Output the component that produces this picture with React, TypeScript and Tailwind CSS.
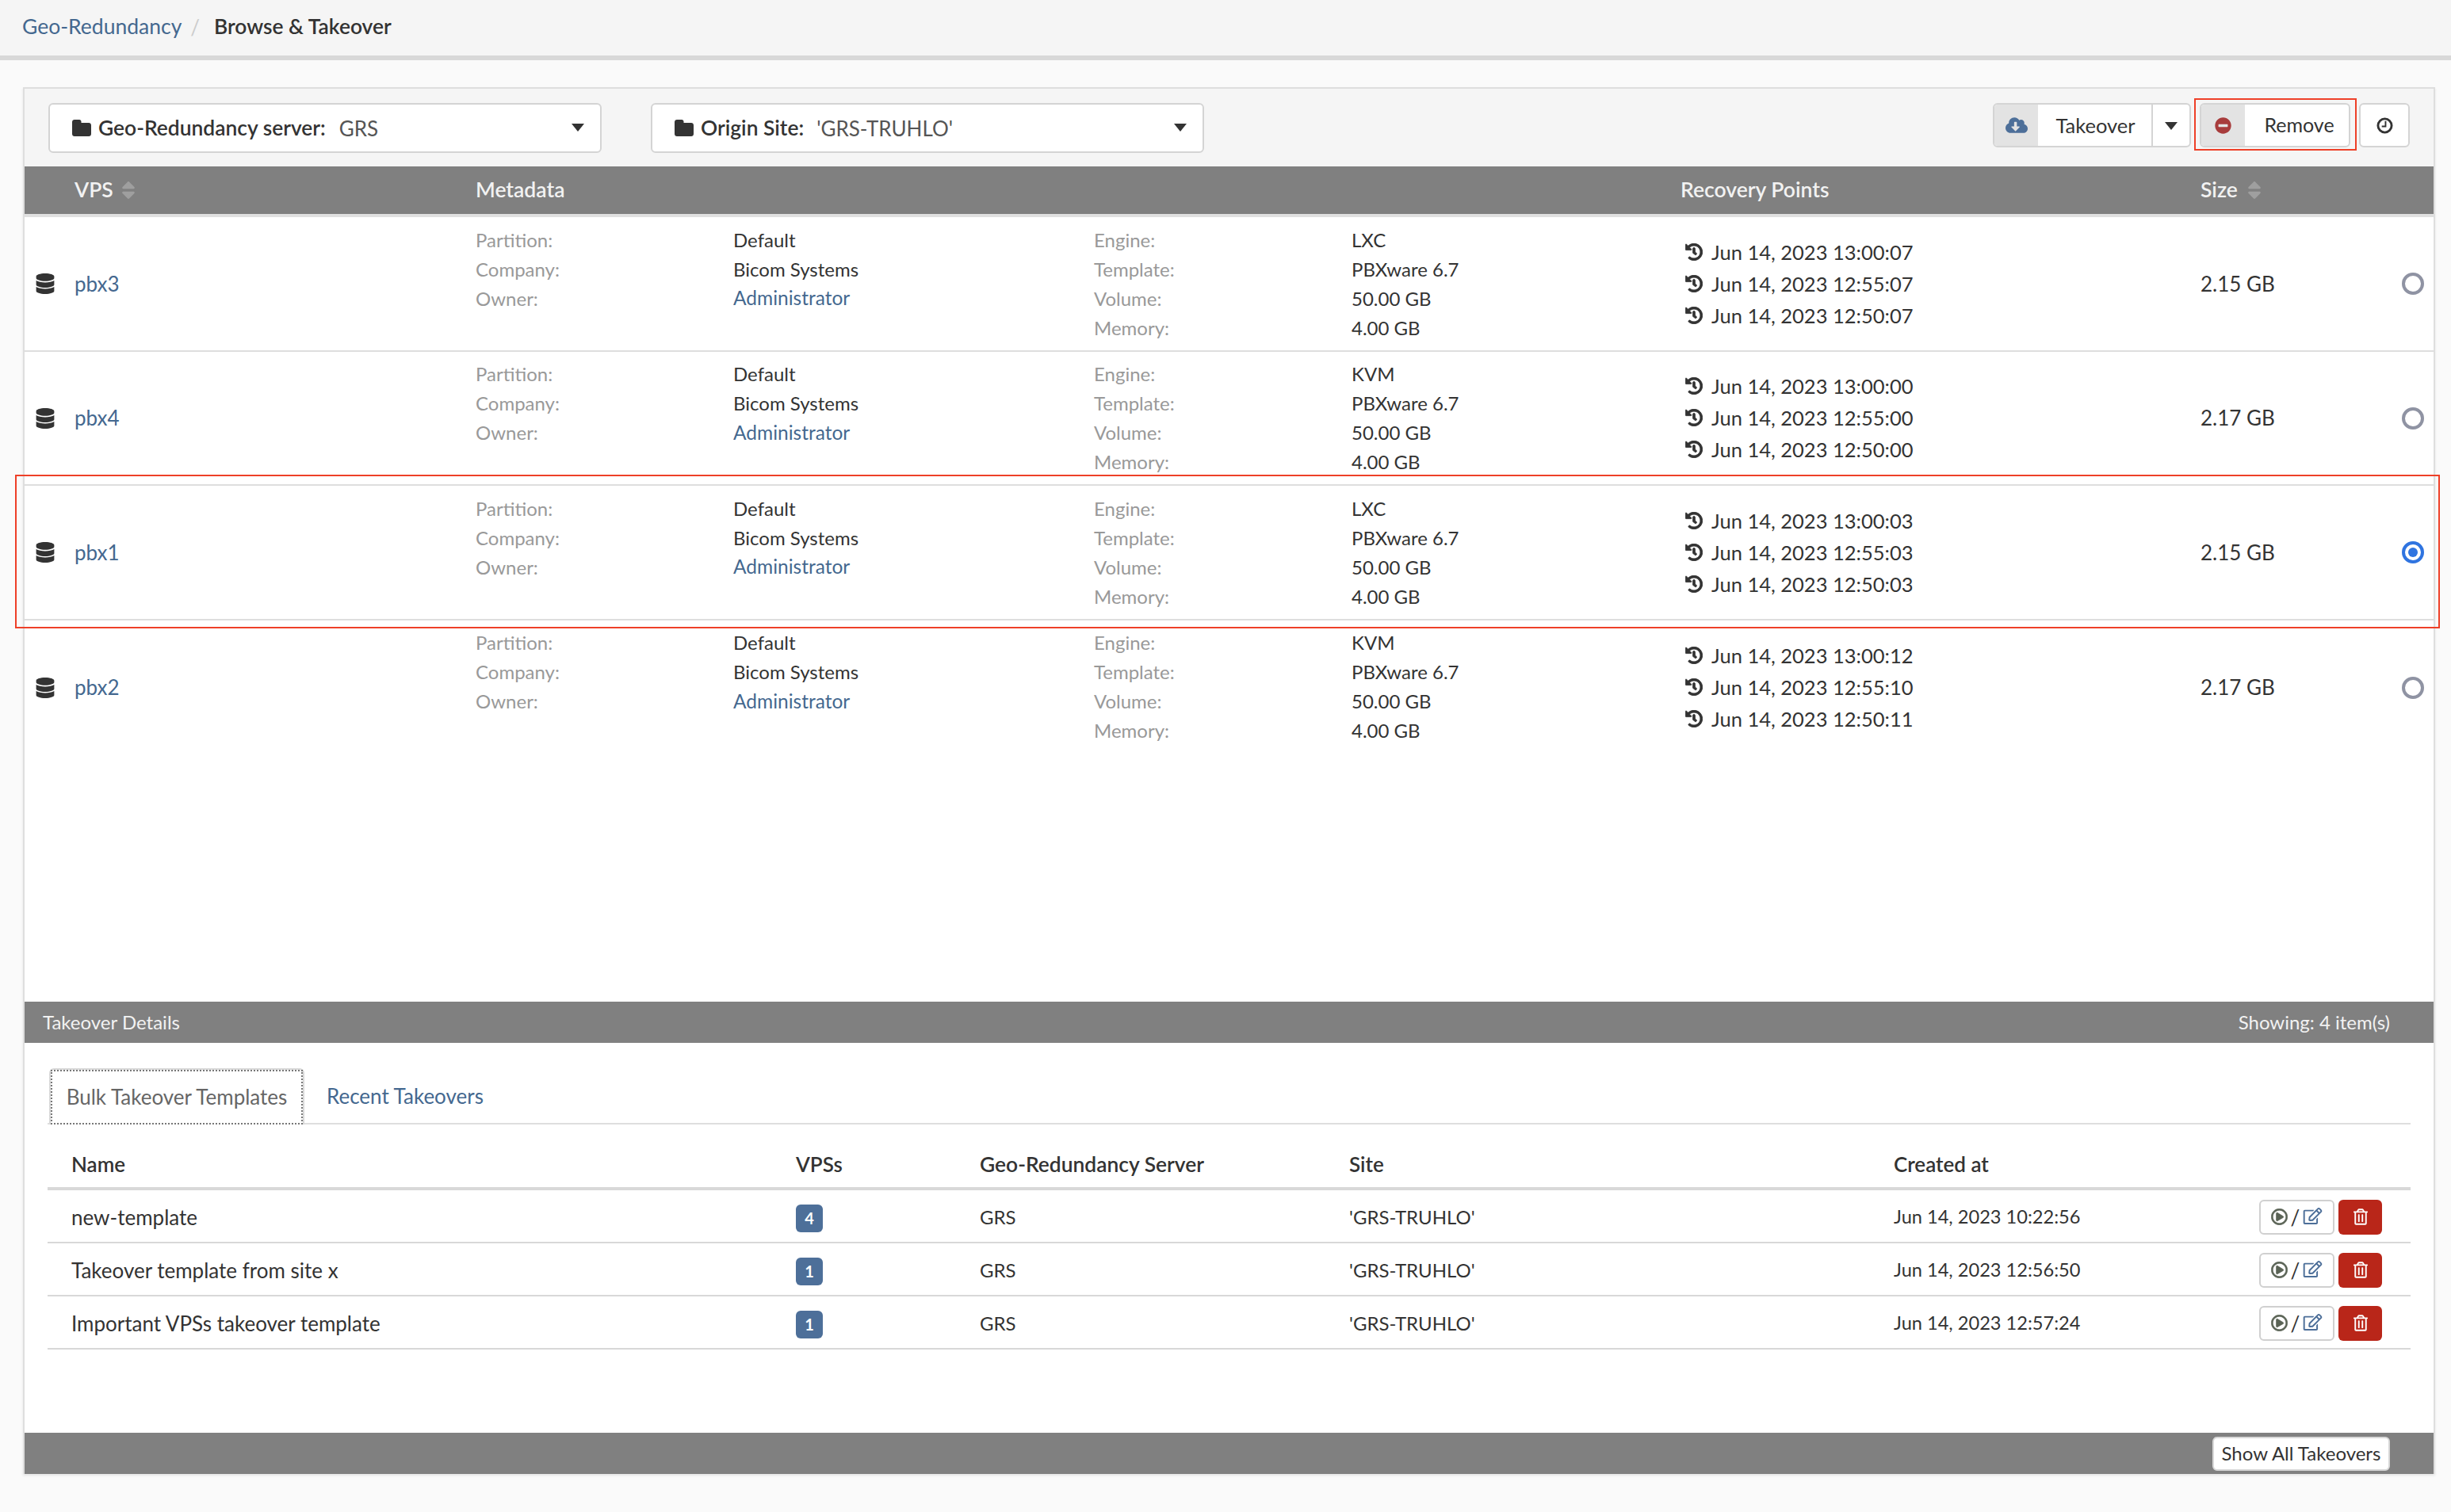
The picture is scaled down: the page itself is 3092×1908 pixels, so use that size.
import {
  FaCloudDownloadAlt,
  FaDatabase,
  FaHistory,
  FaMinusCircle,
  FaRegEdit,
  FaRegPlayCircle,
  FaRegTrashAlt,
  FaSort,
} from 'react-icons/fa';

const vpsRows = [
  { name: 'pbx3', engine: 'LXC', points: ['13:00:07', '12:55:07', '12:50:07'], size: '2.15 GB', selected: false },
  { name: 'pbx4', engine: 'KVM', points: ['13:00:00', '12:55:00', '12:50:00'], size: '2.17 GB', selected: false },
  { name: 'pbx1', engine: 'LXC', points: ['13:00:03', '12:55:03', '12:50:03'], size: '2.15 GB', selected: true },
  { name: 'pbx2', engine: 'KVM', points: ['13:00:12', '12:55:10', '12:50:11'], size: '2.17 GB', selected: false },
];

const templates = [
  { name: 'new-template', vps: 4, created: 'Jun 14, 2023 10:22:56' },
  { name: 'Takeover template from site x', vps: 1, created: 'Jun 14, 2023 12:56:50' },
  { name: 'Important VPSs takeover template', vps: 1, created: 'Jun 14, 2023 12:57:24' },
];

const Caret = () => (
  <svg viewBox="0 0 16 10" className="w-[16px] h-[10px] fill-[#333]">
    <polygon points="0,0 16,0 8,10" />
  </svg>
);

const FolderIcon = () => (
  <svg viewBox="0 0 24 21" className="w-[24px] h-[21px] mr-[9px] fill-[#333]">
    <path d="M3 0h6c1.500 0 2.500 1 2.500 2.500V4H21c1.700 0 3 1.300 3 3v11c0 1.700-1.300 3-3 3H3c-1.700 0-3-1.300-3-3V3c0-1.700 1.300-3 3-3z" />
  </svg>
);

const ClockIcon = () => (
  <svg viewBox="0 0 22 22" className="w-[21px] h-[21px] fill-none stroke-[#333]">
    <circle cx="11" cy="11" r="9" strokeWidth="3" />
    <path d="M12 5v7H7" strokeWidth="2" />
  </svg>
);

const SiteSelect = ({ label, value, width, gap }: { label: string; value: string; width: string; gap: string }) => (
  <div className={`${width} h-[63px] flex items-center bg-white border-2 border-[#d4d4d4] rounded-md pl-[28px] pr-[20px]`}>
    <FolderIcon />
    <span className="font-semibold text-[#333] text-[26.4px] pt-[1px]">{label}</span>
    <span className={`${gap} text-[#555] pt-[1px]`}>{value}</span>
    <span className="ml-auto -mt-[2px]">
      <Caret />
    </span>
  </div>
);

const MetaList = ({ items, wLabel, wValue }: { items: [string, string, boolean?][]; wLabel: string; wValue: string }) => (
  <div className="flex flex-col self-start text-[24px]">
    {items.map(([label, value, link]) => (
      <div key={label} className="flex h-[37px] items-center">
        <span className={`${wLabel} text-[#999]`}>{label}</span>
        <span className={`${wValue} ${link ? 'text-[#44688f] text-[24.5px]' : 'text-[#333]'}`}>{value}</span>
      </div>
    ))}
  </div>
);

const VpsRow = ({ row, last }: { row: (typeof vpsRows)[number]; last: boolean }) => (
  <div className={`flex h-[169.5px] items-center bg-white py-[10px] ${last ? '' : 'border-b-2 border-[#dedede]'}`}>
    <div className="w-[569px] flex items-center pl-[14px] pt-[1px]">
      <FaDatabase className="text-[#333] w-[24px] h-[26px] mr-[25px]" />
      <span className="text-[#44688f]">{row.name}</span>
    </div>
    <MetaList
      wLabel="w-[325px]"
      wValue="w-[455px]"
      items={[
        ['Partition:', 'Default'],
        ['Company:', 'Bicom Systems'],
        ['Owner:', 'Administrator', true],
      ]}
    />
    <MetaList
      wLabel="w-[325px]"
      wValue="w-[415px]"
      items={[
        ['Engine:', row.engine],
        ['Template:', 'PBXware 6.7'],
        ['Volume:', '50.00 GB'],
        ['Memory:', '4.00 GB'],
      ]}
    />
    <div className="w-[656px] flex flex-col pl-[6px] text-[25.5px]">
      {row.points.map((p) => (
        <div key={p} className="h-[40px] flex items-center text-[#333]">
          <FaHistory className="w-[22px] h-[22px] mr-[11px] stroke-[#333] stroke-[20]" />
          Jun 14, 2023 {p}
        </div>
      ))}
    </div>
    <div className="flex-1 flex items-center justify-between pr-[12px] pt-[1px] text-[#333]">
      <span>{row.size}</span>
      <span
        className={`w-[28px] h-[28px] rounded-full flex items-center justify-center border-4 ${
          row.selected ? 'border-[#2f74e0]' : 'border-[#8f93a3]'
        }`}
      >
        {row.selected && <span className="w-[12px] h-[12px] rounded-full bg-[#2f74e0]" />}
      </span>
    </div>
  </div>
);

const App = () => {
  return (
    <div className="relative w-[3092px] h-[1908px] overflow-hidden bg-[#fafafa] text-[26px] font-['Lato','Noto_Sans',sans-serif]">
      <header className="h-[76px] flex items-start bg-[#f5f5f5] border-b-[6px] border-[#d8d8d8]">
        <nav className="h-[68px] flex items-center pl-[28px]">
          <span className="text-[#44688f] text-[26.5px]">Geo-Redundancy</span>
          <span className="text-[#ccc] ml-[11px] mr-[18px]">/</span>
          <span className="font-semibold text-[#333] text-[26.4px]">Browse &amp; Takeover</span>
        </nav>
      </header>

      <main className="mt-[34px] ml-[29px] w-[3043px] h-[1750px] flex flex-col border-x-2 border-t-2 border-[#dedede] shadow-[0_2px_3px_#e4e4e4]">
        <div className="h-[98px] flex items-start bg-[#f5f5f5] pt-[18px] pl-[30px] pr-[30px]">
          <SiteSelect label="Geo-Redundancy server:" value="GRS" width="w-[698px]" gap="ml-[17px]" />
          <div className="w-[62px]" />
          <SiteSelect label="Origin Site:" value="'GRS-TRUHLO'" width="w-[698px]" gap="ml-[16px]" />

          <div className="ml-auto flex items-center">
            <div className="w-[250px] h-[56px] flex bg-white border-2 border-[#d4d4d4] rounded-md overflow-hidden text-[#333]">
              <span className="w-[55px] flex items-center justify-center bg-[#e3e3e3]">
                <FaCloudDownloadAlt className="text-[#4d6f99] w-[28px] h-[24px]" />
              </span>
              <span className="w-[143px] flex items-center justify-center pl-[2px] text-[25.5px]">Takeover</span>
              <span className="flex-1 flex items-center justify-center border-l-2 border-[#d4d4d4] pt-[2px]">
                <Caret />
              </span>
            </div>
            <div className="ml-[11px] w-[190px] h-[56px] flex bg-white border-2 border-[#d4d4d4] rounded-md overflow-hidden text-[#333]">
              <span className="w-[55px] flex items-center justify-center bg-[#e3e3e3]">
                <FaMinusCircle className="text-[#a83c3c] w-[21px] h-[21px]" />
              </span>
              <span className="flex-1 flex items-center justify-center pl-[6px] text-[25px]">Remove</span>
            </div>
            <div className="ml-[11px] w-[64px] h-[56px] flex items-center justify-center bg-white border-2 border-[#d4d4d4] rounded-md">
              <ClockIcon />
            </div>
          </div>
        </div>

        <div className="h-[64px] flex items-center bg-[#808080] border-b-4 border-[#e0e0e0] text-[#f2f2f2] text-[26.5px] font-semibold">
          <div className="w-[569px] pl-[63px] flex items-center gap-[10px]">
            VPS <FaSort className="text-[#9f9f9f] w-[18px] h-[28px]" />
          </div>
          <div className="w-[1520px]">Metadata</div>
          <div className="w-[656px]">Recovery Points</div>
          <div className="flex items-center gap-[12px]">
            Size <FaSort className="text-[#9f9f9f] w-[18px] h-[28px]" />
          </div>
        </div>

        <div className="flex-1 bg-white flex flex-col">
          <div className="h-[990px]">
            {vpsRows.map((row, i) => (
              <VpsRow key={row.name} row={row} last={i === vpsRows.length - 1} />
            ))}
          </div>

          <div className="h-[52px] flex items-center justify-between bg-[#808080] text-[24px] text-[#f2f2f2] pl-[23px] pr-[55px]">
            <span>Takeover Details</span>
            <span>Showing: 4 item(s)</span>
          </div>

          <div className="flex-1 px-[29px] pt-[32px]">
            <div className="h-[71px] flex border-b-2 border-[#dedede]">
              <div className="ml-[2px] w-[322px] h-[71px] bg-white border-2 border-b-0 border-[#d8d8d8] rounded-t-md text-[#666]">
                <div className="h-full flex items-center justify-center border-2 border-dotted border-[#777]">
                  Bulk Takeover Templates
                </div>
              </div>
              <div className="ml-[28px] pt-[2px] flex items-center text-[#44688f]">Recent Takeovers</div>
            </div>

            <div className="h-[83px] flex items-center pt-[22px] border-b-4 border-[#d8d8d8] font-semibold text-[#333]">
              <div className="w-[944px] pl-[30px]">Name</div>
              <div className="w-[232px]">VPSs</div>
              <div className="w-[466px] text-[26.4px]">Geo-Redundancy Server</div>
              <div className="w-[688px]">Site</div>
              <div className="-ml-[1px]">Created at</div>
            </div>

            {templates.map((t) => (
              <div key={t.name} className="h-[67px] flex items-center border-b-2 border-[#d8d8d8] text-[#333]">
                <div className="w-[944px] pl-[30px] pt-[3px]">{t.name}</div>
                <div className="w-[232px] pt-[5px]">
                  <span className="w-[34px] h-[35px] rounded-md bg-[#4d6f99] text-white text-[20px] font-bold flex items-center justify-center">
                    {t.vps}
                  </span>
                </div>
                <div className="w-[466px] pt-[3px] text-[24px]">GRS</div>
                <div className="w-[687px] pt-[3px] text-[24px]">'GRS-TRUHLO'</div>
                <div className="w-[461px] pt-[3px] text-[23.6px]">{t.created}</div>
                <div className="w-[95px] h-[44px] mt-[2px] flex items-center justify-center gap-[4px] bg-white border-2 border-[#d0d0d0] rounded-md">
                  <FaRegPlayCircle className="text-[#5a6355] w-[21px] h-[21px] stroke-[#5a6355] stroke-[16]" />
                  <span className="text-[#333] leading-none">/</span>
                  <FaRegEdit className="text-[#4d6f99] w-[25px] h-[21px] -mt-[2px]" />
                </div>
                <div className="ml-[5px] w-[55px] h-[44px] mt-[2px] flex items-center justify-center rounded-md bg-[#b92619]">
                  <FaRegTrashAlt className="text-white w-[18px] h-[21px]" />
                </div>
              </div>
            ))}
          </div>

          <div className="h-[52px] flex items-center justify-end bg-[#808080] pr-[55px]">
            <div className="w-[224px] h-[43px] flex items-center justify-center bg-white border-2 border-[#d8d8d8] rounded-md text-[24px] text-[#333]">
              Show All Takeovers
            </div>
          </div>
        </div>
      </main>

      {/* red annotation boxes */}
      <div className="absolute left-[19px] top-[599px] w-[3059px] h-[194px] border-2 border-[#ee4028]" />
      <div className="absolute left-[2768px] top-[124px] w-[205px] h-[66px] border-2 border-[#ee4028]" />
    </div>
  );
};

export default App;
